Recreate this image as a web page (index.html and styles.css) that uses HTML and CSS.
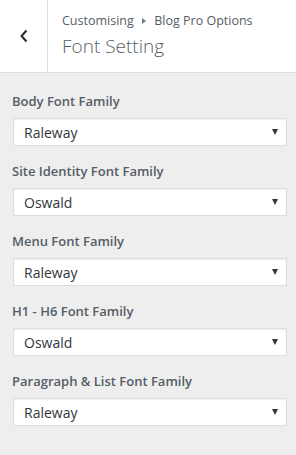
FILE: index.html
```html
<!DOCTYPE html>
<html lang="en">
<head>
    <meta charset="UTF-8">
    <meta name="viewport" content="width=device-width, initial-scale=1.0">
    <title>Font Setting</title>
    <link rel="stylesheet" href="styles.css">
</head>
<body>
    <header class="panel-header">
        <button class="back" aria-label="Back">
            <svg width="10" height="14" viewBox="0 0 10 14"><path d="M7.5 1.5 L2.5 7 L7.5 12.5" fill="none" stroke="#23282d" stroke-width="2"/></svg>
        </button>
        <div class="titles">
            <span class="crumb">Customising <i class="sep"></i> Blog Pro Options</span>
            <h1>Font Setting</h1>
        </div>
    </header>
    <main class="controls">
        <div class="field">
            <label>Body Font Family</label>
            <div class="select"><span>Raleway</span><i class="arrow"></i></div>
        </div>
        <div class="field">
            <label>Site Identity Font Family</label>
            <div class="select"><span>Oswald</span><i class="arrow"></i></div>
        </div>
        <div class="field">
            <label>Menu Font Family</label>
            <div class="select"><span>Raleway</span><i class="arrow"></i></div>
        </div>
        <div class="field">
            <label>H1 - H6 Font Family</label>
            <div class="select"><span>Oswald</span><i class="arrow"></i></div>
        </div>
        <div class="field">
            <label>Paragraph &amp; List Font Family</label>
            <div class="select"><span>Raleway</span><i class="arrow"></i></div>
        </div>
    </main>
</body>
</html>
```

FILE: styles.css
```css
body {
    margin: 0;
    background-color: #eee;
    font-family: "Open Sans", "Noto Sans", Arial, sans-serif;
    color: #555d66;
}

.panel-header {
    display: flex;
    height: 72px;
    background-color: #fff;
    border-bottom: 1px solid #ddd;
}

.back {
    width: 48px;
    padding: 0;
    border: none;
    border-right: 1px solid #ddd;
    background: none;
    display: flex;
    justify-content: center;
    align-items: center;
}

.titles {
    display: flex;
    flex-direction: column;
    justify-content: center;
    padding-left: 14px;
    padding-bottom: 2px;
}

.crumb {
    font-size: 12.5px;
    line-height: 18px;
    color: #555d66;
}

.crumb .sep {
    display: inline-block;
    width: 0;
    height: 0;
    margin: 0 5px 1px 5px;
    vertical-align: middle;
    border-top: 3px solid transparent;
    border-bottom: 3px solid transparent;
    border-left: 4px solid #72777c;
}

.titles h1 {
    margin: 4px 0 0;
    font-size: 19px;
    font-weight: 300;
    line-height: 24px;
    color: #555d66;
}

.controls {
    padding: 18px 9px 0 13px;
}

.field {
    margin-bottom: 15px;
}

.field label {
    display: block;
    margin-left: -1px;
    font-size: 13px;
    font-weight: 600;
    line-height: 20px;
    margin-bottom: 7px;
}

.select {
    display: flex;
    justify-content: space-between;
    align-items: center;
    height: 26px;
    padding: 0 8px 0 10px;
    background-color: #fff;
    border: 1px solid #ddd;
    box-shadow: inset 0 1px 2px rgba(0, 0, 0, 0.07);
    font-size: 14px;
    color: #32373c;
}

.arrow {
    width: 0;
    height: 0;
    border-left: 3.5px solid transparent;
    border-right: 3.5px solid transparent;
    border-top: 6px solid #32373c;
}
```
